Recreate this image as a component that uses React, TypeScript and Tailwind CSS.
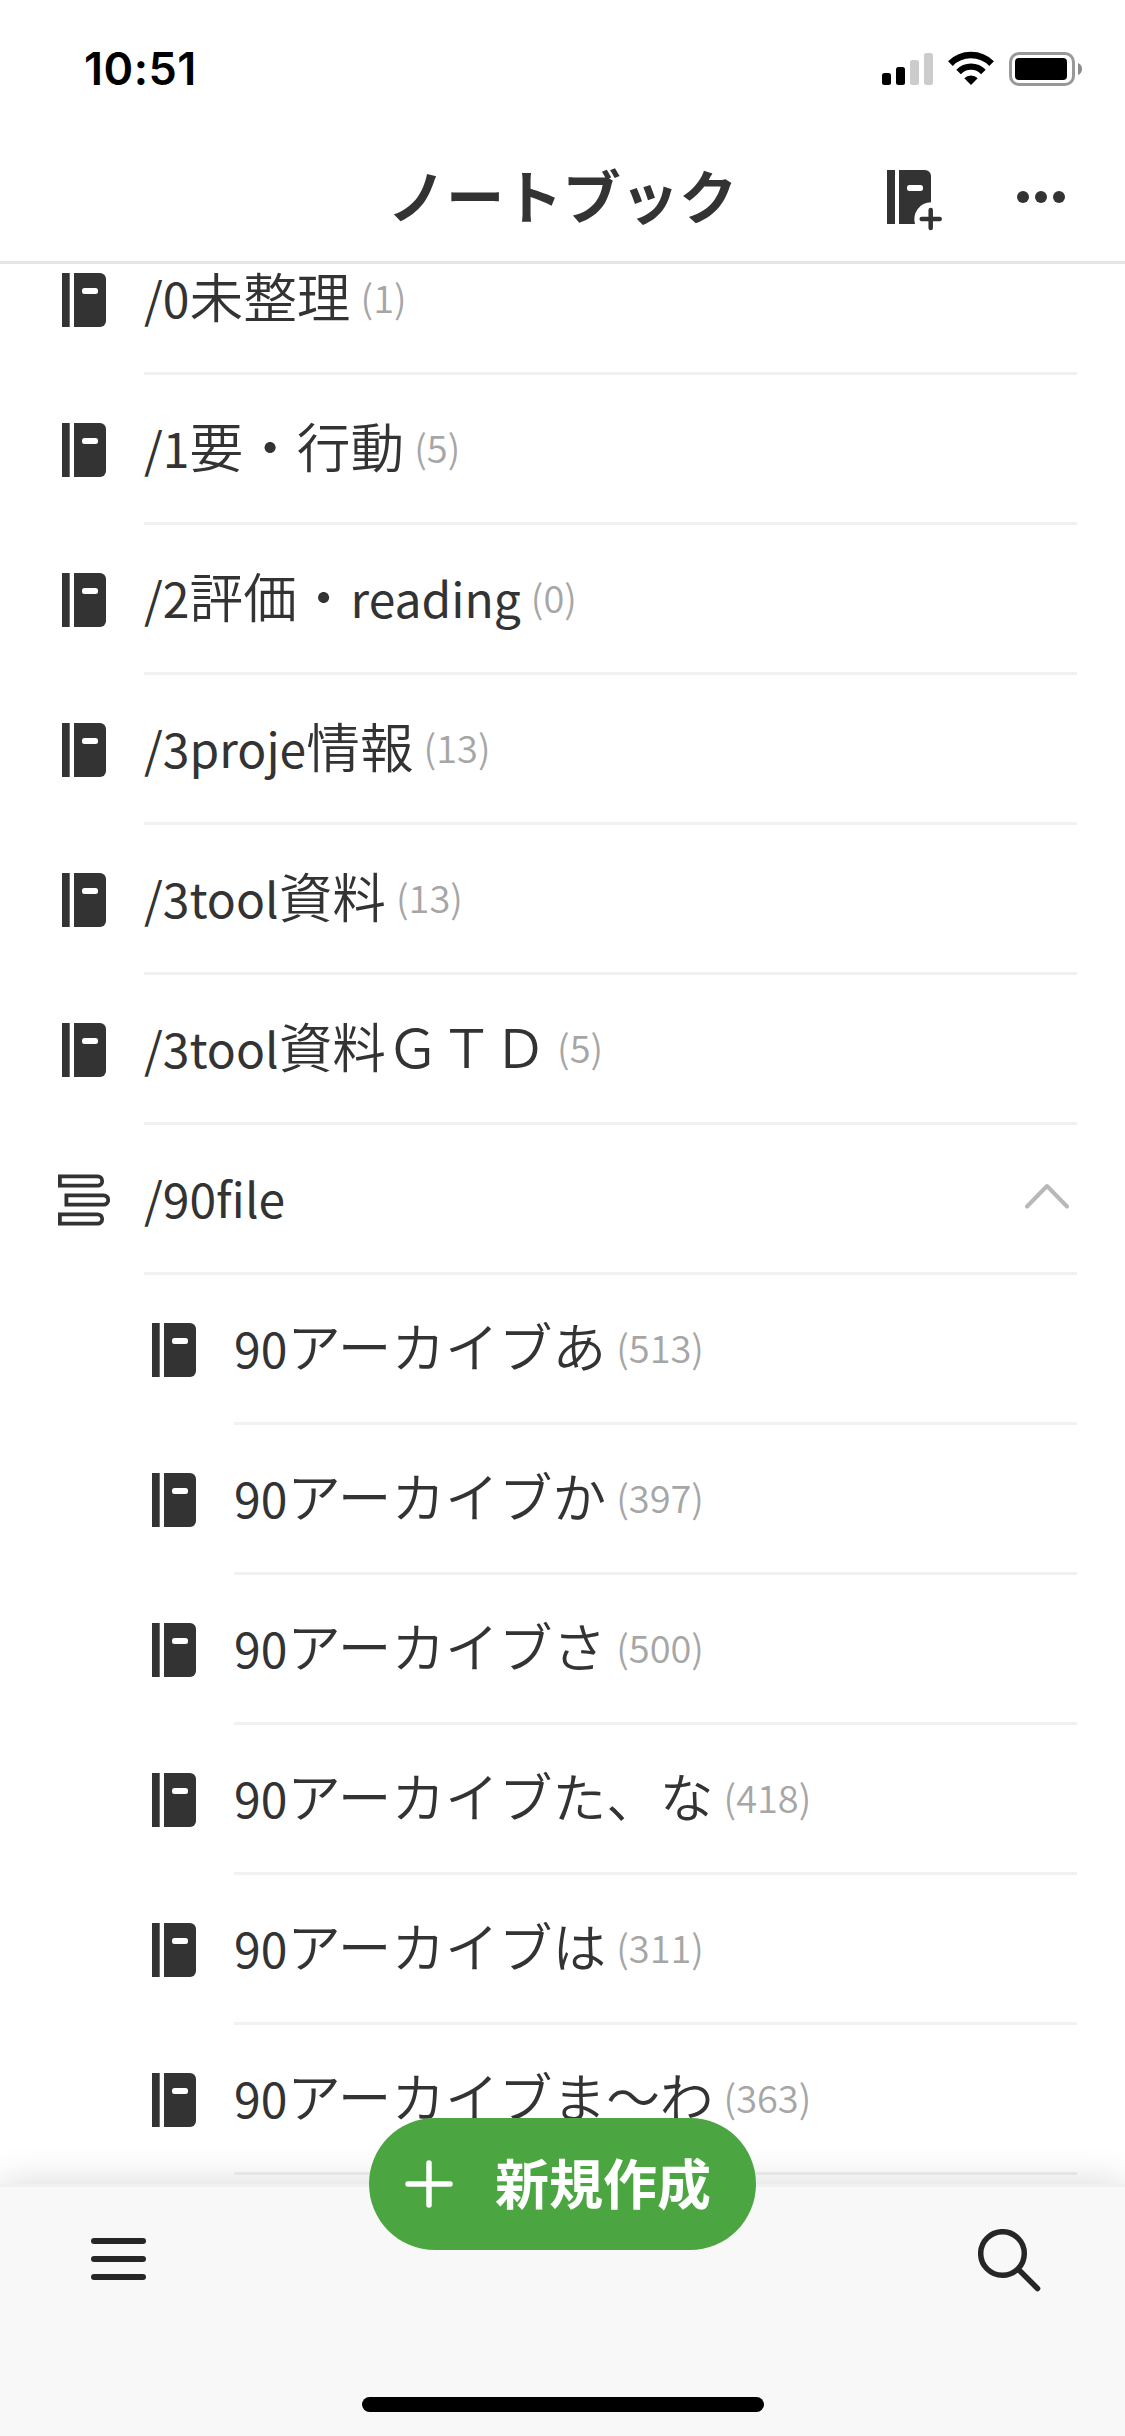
import React from 'react';

interface Notebook {
  name: string;
  count?: number;
  nested?: boolean;
  stack?: boolean;
}

const notebooks: Notebook[] = [
  { name: '/0未整理', count: 1 },
  { name: '/1要・行動', count: 5 },
  { name: '/2評価・reading', count: 0 },
  { name: '/3proje情報', count: 13 },
  { name: '/3tool資料', count: 13 },
  { name: '/3tool資料ＧＴＤ', count: 5 },
  { name: '/90file', stack: true },
  { name: '90アーカイブあ', count: 513, nested: true },
  { name: '90アーカイブか', count: 397, nested: true },
  { name: '90アーカイブさ', count: 500, nested: true },
  { name: '90アーカイブた、な', count: 418, nested: true },
  { name: '90アーカイブは', count: 311, nested: true },
  { name: '90アーカイブま〜わ', count: 363, nested: true },
];

const NotebookIcon = () => (
  <svg width="44" height="54" viewBox="0 0 44 54" fill="#333333" className="shrink-0">
    <rect width="7.7" height="54" />
    <path d="M12 0H38a6 6 0 0 1 6 6V48a6 6 0 0 1-6 6H12Z" />
    <rect x="20" y="15" width="16" height="6" rx="2.5" fill="#ffffff" />
  </svg>
);

const StackIcon = () => (
  <svg width="52" height="52" viewBox="0 0 52 52" fill="none" stroke="#333333" strokeWidth="3.8" className="shrink-0">
    <path d="M1.9 2.3H39.5a4.7 4.7 0 0 1 0 9.4H1.9Z" />
    <path d="M8.4 21.3H45.5a4.7 4.7 0 0 1 0 9.4H8.4Z" />
    <path d="M1.9 40.3H39.5a4.7 4.7 0 0 1 0 9.4H1.9Z" />
  </svg>
);

const NewNotebookIcon = () => (
  <svg width="56" height="62" viewBox="0 0 56 62" fill="#333333">
    <rect width="8" height="54" />
    <path d="M12 0H38a6 6 0 0 1 6 6V32.2A17 17 0 0 0 28 54H12Z" />
    <rect x="20" y="15" width="16" height="6" rx="2.5" fill="#ffffff" />
    <path d="M43.7 40V58M34.7 49H52.7" stroke="#333333" strokeWidth="4.5" strokeLinecap="round" />
  </svg>
);

// kanji and kana are set a step larger than the latin part of a name
const NotebookName: React.FC<{ name: string }> = ({ name }) => (
  <span className="pb-[3px] whitespace-nowrap text-[48px] leading-[72px] text-[#333333]">
    {name.split(/([\x20-\x7e]+)/).filter(Boolean).map((part, i) =>
      /^[\x20-\x7e]/.test(part) ? (
        part
      ) : (
        <span key={i} className="text-[53.7px] font-[350] leading-none">{part}</span>
      )
    )}
  </span>
);

const NotebookRow: React.FC<{ item: Notebook }> = ({ item }) => (
  <div className={`flex h-[150px] shrink-0 pr-12 ${item.nested ? 'pl-[90px]' : ''}`}>
    <div className={`flex w-36 shrink-0 items-center ${item.stack ? 'pl-[58px]' : 'pl-[62px]'}`}>
      {item.stack ? <StackIcon /> : <NotebookIcon />}
    </div>
    <div className="flex flex-1 items-center border-b-[3px] border-[#f1f1f1]">
      <NotebookName name={item.name} />
      {item.count !== undefined && (
        <span className="ml-[10px] pb-1 text-[38px] font-[350] leading-[56px] text-[#a6a6a6]">({item.count})</span>
      )}
      {item.stack && (
        <svg width="44" height="26" viewBox="0 0 44 26" fill="none" stroke="#b8b8b8" strokeWidth="4" strokeLinecap="round" strokeLinejoin="round" className="mr-2 mb-[5px] ml-auto">
          <path d="M2 23.5L22 3L42 23.5" />
        </svg>
      )}
    </div>
  </div>
);

const StatusBar = () => (
  <div className="flex h-[132px] items-start justify-between pt-[51px] pr-[42px] pl-[84px]">
    <span className="font-['Inter'] text-[45px] font-semibold leading-9 tracking-[0.5px] text-black">10:51</span>
    <div className="flex">
      <svg width="201" height="36" viewBox="0 0 201 36">
        <rect x="0" y="22" width="9" height="12" rx="2.5" />
        <rect x="14" y="16" width="9" height="18" rx="2.5" />
        <rect x="28" y="9" width="9" height="25" rx="2.5" fill="#cccccc" />
        <rect x="42" y="2" width="9" height="32" rx="2.5" fill="#cccccc" />
        <g fill="none" stroke="#000000">
          <path d="M68.4 12.6A29 29 0 0 1 109.6 12.6" strokeWidth="6.6" />
          <path d="M76.6 20.9A17.3 17.3 0 0 1 101.4 20.9" strokeWidth="6.4" />
        </g>
        <path d="M89 34L82.3 27.3A9.4 9.4 0 0 1 95.7 27.3Z" />
        <rect x="128.5" y="2.5" width="63" height="31" rx="8.5" fill="none" stroke="#999999" strokeWidth="3" />
        <rect x="133" y="7" width="52" height="22" rx="4" />
        <path d="M196 12A6.5 6.5 0 0 1 196 24Z" fill="#8c8c8c" />
      </svg>
    </div>
  </div>
);

const Header = () => (
  <div className="grid h-[132px] grid-cols-3 items-center border-b-[3px] border-[#e5e5e5]">
    <h1 className="col-start-2 -mt-[6px] text-center text-[58.3px] font-bold leading-[80px] whitespace-nowrap text-[#333333]">ノートブック</h1>
    <div className="flex items-center justify-end gap-[74px] pr-[60px]">
      <div className="pt-[8px]">
        <NewNotebookIcon />
      </div>
      <div className="flex gap-[6px]">
        <span className="size-3 rounded-full bg-[#333333]" />
        <span className="size-3 rounded-full bg-[#333333]" />
        <span className="size-3 rounded-full bg-[#333333]" />
      </div>
    </div>
  </div>
);

const BottomBar = () => (
  <div className="relative flex h-[252px] flex-col items-center justify-between border-t-[3px] border-[#f1f1f1] bg-[#f8f8f8] pb-6 shadow-[0_0_36px_rgba(0,0,0,0.16)]">
    <div className="flex w-full justify-between pt-[42px] pr-[84px] pl-[91px]">
      <div className="mt-[9px] flex w-[55px] flex-col gap-3">
        <span className="h-[6px] rounded-full bg-[#262626]" />
        <span className="h-[6px] rounded-full bg-[#262626]" />
        <span className="h-[6px] rounded-full bg-[#262626]" />
      </div>
      <svg width="63" height="63" viewBox="0 0 63 63" fill="none" stroke="#262626" strokeWidth="5.5" strokeLinecap="round">
        <circle cx="24.5" cy="24.5" r="21.8" />
        <path d="M41 41L59.5 59.5" />
      </svg>
    </div>
    <div className="h-[15px] w-[402px] rounded-full bg-black" />

    {/* floating create button */}
    <button className="absolute -top-[69px] left-[369px] flex h-[132px] w-[387px] items-center rounded-full bg-[#4ba541] pl-9 text-white">
      <svg width="48" height="48" viewBox="0 0 48 48" stroke="#ffffff" strokeWidth="5.5" strokeLinecap="round">
        <path d="M24 3V45M3 24H45" />
      </svg>
      <span className="ml-[42px] pb-[5px] text-[54px] font-bold leading-[72px] whitespace-nowrap">新規作成</span>
    </button>
  </div>
);

const App: React.FC = () => {
  return (
    <div className="flex h-[2436px] w-[1125px] flex-col overflow-hidden bg-white font-['Noto_Sans_CJK_JP',sans-serif]">
      <StatusBar />
      <Header />
      {/* the list is scrolled a little, so its first row starts under the header */}
      <div className="-mt-[39px] flex flex-1 flex-col">
        {notebooks.map((item) => (
          <NotebookRow key={item.name} item={item} />
        ))}
      </div>
      <BottomBar />
    </div>
  );
};

export default App;
